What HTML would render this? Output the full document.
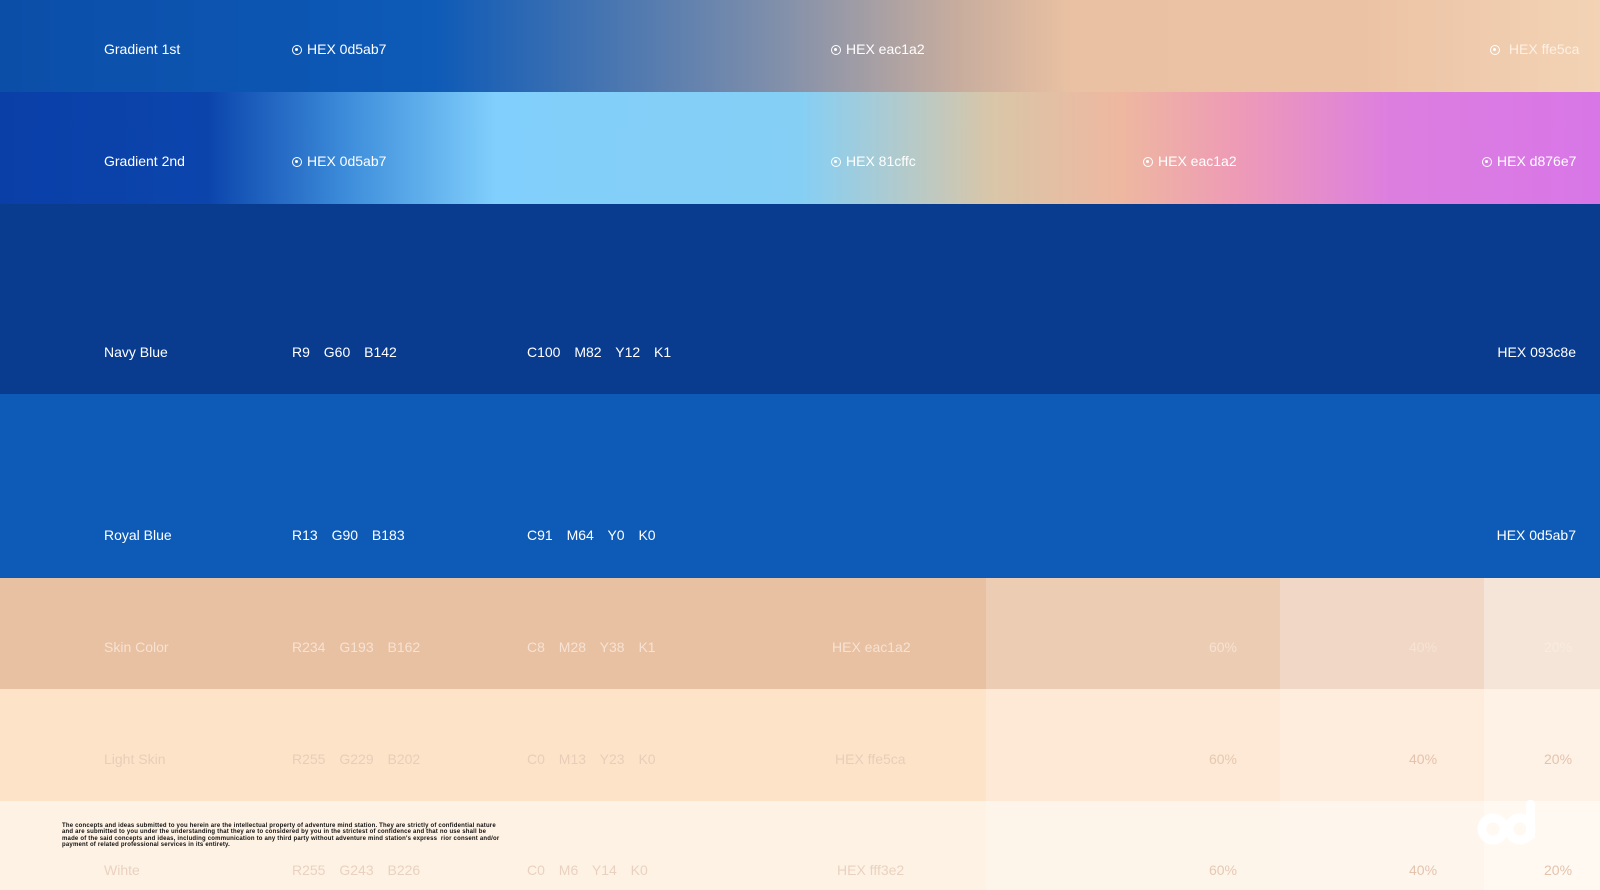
<!DOCTYPE html>
<html><head><meta charset="utf-8"><style>
*{margin:0;padding:0;box-sizing:border-box}
body{width:1600px;height:890px;overflow:hidden;font-family:"Liberation Sans",sans-serif;font-size:14px;position:relative;background:#fef2e4}
.row{position:absolute;left:0;width:1600px}
.t{position:absolute;white-space:nowrap;line-height:16px;transform:translateY(-8px)}
.r{text-align:right}
.w{color:#fff}
.d{display:inline-block;width:10px;height:10px;border:1.5px solid #fff;border-radius:50%;position:relative;margin-right:5px;vertical-align:-1px}
.d:after{content:"";position:absolute;left:2px;top:2px;width:3px;height:3px;background:#fff;border-radius:50%}
.cell{position:absolute;top:0;height:100%}
.sp{word-spacing:10px}
</style></head><body>
<div class="row" style="top:0;height:92px;background:linear-gradient(90deg,#0b4ea8 0%,#0d5ab7 27%,#7d8eab 48%,#c8ad9e 60%,#eac1a2 67%,#ecc2a4 85%,#f3d3b5 100%)"></div>
<div class="row" style="top:92px;height:112px;background:linear-gradient(90deg,#0a3fa8 0%,#0b45ac 13%,#3f8fdc 22%,#81cffc 31%,#85cff5 50%,#d9c6a8 62%,#eeb8a0 70%,#ee9cb5 77%,#dc7ee0 87%,#d876e7 100%)"></div>
<div class="row" style="top:204px;height:190px;background:#093c8e"></div>
<div class="row" style="top:394px;height:184px;background:#0d5ab7"></div>
<div class="row" style="top:578px;height:111px;background:#e8c0a2">
<div class="cell" style="left:986px;width:294px;background:#ecccb3"></div>
<div class="cell" style="left:1280px;width:204px;background:#f1d8c6"></div>
<div class="cell" style="left:1484px;width:116px;background:#f5e5d8"></div></div>
<div class="row" style="top:689px;height:112px;background:#fde4c9">
<div class="cell" style="left:986px;width:294px;background:#fde9d5"></div>
<div class="cell" style="left:1280px;width:204px;background:#feecdc"></div>
<div class="cell" style="left:1484px;width:116px;background:#fef2e6"></div></div>
<div class="row" style="top:801px;height:89px;background:#fef2e4">
<div class="cell" style="left:986px;width:294px;background:#fef5ea"></div>
<div class="cell" style="left:1280px;width:204px;background:#fef6ed"></div>
<div class="cell" style="left:1484px;width:116px;background:#fff9f2"></div></div>

<div class="t w" style="left:104px;top:49px">Gradient 1st</div>
<div class="t w" style="left:292px;top:49px"><span class="d"></span>HEX 0d5ab7</div>
<div class="t w" style="left:831px;top:49px"><span class="d"></span>HEX eac1a2</div>
<div class="t" style="left:1490px;top:49px;color:#fdf0e4"><span class="d"></span> HEX ffe5ca</div>

<div class="t w" style="left:104px;top:161px">Gradient 2nd</div>
<div class="t w" style="left:292px;top:161px"><span class="d"></span>HEX 0d5ab7</div>
<div class="t w" style="left:831px;top:161px"><span class="d"></span>HEX 81cffc</div>
<div class="t w" style="left:1143px;top:161px"><span class="d"></span>HEX eac1a2</div>
<div class="t w" style="left:1482px;top:161px"><span class="d"></span>HEX d876e7</div>

<div class="t w" style="left:104px;top:352px">Navy Blue</div>
<div class="t w sp" style="left:292px;top:352px">R9 G60 B142</div>
<div class="t w sp" style="left:527px;top:352px">C100 M82 Y12 K1</div>
<div class="t w r" style="right:24px;top:352px">HEX 093c8e</div>

<div class="t w" style="left:104px;top:535px">Royal Blue</div>
<div class="t w sp" style="left:292px;top:535px">R13 G90 B183</div>
<div class="t w sp" style="left:527px;top:535px">C91 M64 Y0 K0</div>
<div class="t w r" style="right:24px;top:535px">HEX 0d5ab7</div>

<div style="color:#f7e2d3">
<div class="t" style="left:104px;top:647px">Skin Color</div>
<div class="t sp" style="left:292px;top:647px">R234 G193 B162</div>
<div class="t sp" style="left:527px;top:647px">C8 M28 Y38 K1</div>
<div class="t" style="left:832px;top:647px">HEX eac1a2</div>
<div class="t r" style="right:363px;top:647px">60%</div>
<div class="t" style="left:1409px;top:647px">40%</div>
<div class="t" style="left:1544px;top:647px;color:#f8ebe0">20%</div>
</div>
<div style="color:#e9cdb8">
<div class="t" style="left:104px;top:759px">Light Skin</div>
<div class="t sp" style="left:292px;top:759px">R255 G229 B202</div>
<div class="t sp" style="left:527px;top:759px">C0 M13 Y23 K0</div>
<div class="t" style="left:835px;top:759px">HEX ffe5ca</div>
<div class="t r" style="right:363px;top:759px;color:#e6c8b2">60%</div>
<div class="t" style="left:1409px;top:759px;color:#e4c3ad">40%</div>
<div class="t" style="left:1544px;top:759px;color:#e4c3ad">20%</div>
</div>
<div style="color:#ead1bf">
<div class="t" style="left:104px;top:870px">Wihte</div>
<div class="t sp" style="left:292px;top:870px">R255 G243 B226</div>
<div class="t sp" style="left:527px;top:870px">C0 M6 Y14 K0</div>
<div class="t" style="left:837px;top:870px">HEX fff3e2</div>
<div class="t r" style="right:363px;top:870px;color:#e6c8b3">60%</div>
<div class="t" style="left:1409px;top:870px;color:#e4c3ad">40%</div>
<div class="t" style="left:1544px;top:870px;color:#e4c3ad">20%</div>
</div>

<div style="position:absolute;left:62px;top:823px;font-size:6px;line-height:6.3px;color:#111;font-weight:bold;width:440px;letter-spacing:0.2px">The concepts and ideas submitted to you herein are the intellectual property of adventure mind station. They are strictly of confidential nature and are submitted to you under the understanding that they are to considered by you in the strictest of confidence and that no use shall be made of the said concepts and ideas, including communication to any third party without adventure mind station's express &nbsp;rior consent and/or payment of related professional services in its entirety.</div>

<svg style="position:absolute;left:1476px;top:798px" width="64" height="48" viewBox="0 0 64 48">
<circle cx="17" cy="31" r="11" fill="none" stroke="#fff" stroke-width="9"/>
<circle cx="44" cy="31" r="11" fill="none" stroke="#fff" stroke-width="9"/>
<rect x="50" y="2" width="9" height="40" rx="4" fill="#fff"/>
</svg>
</body></html>
